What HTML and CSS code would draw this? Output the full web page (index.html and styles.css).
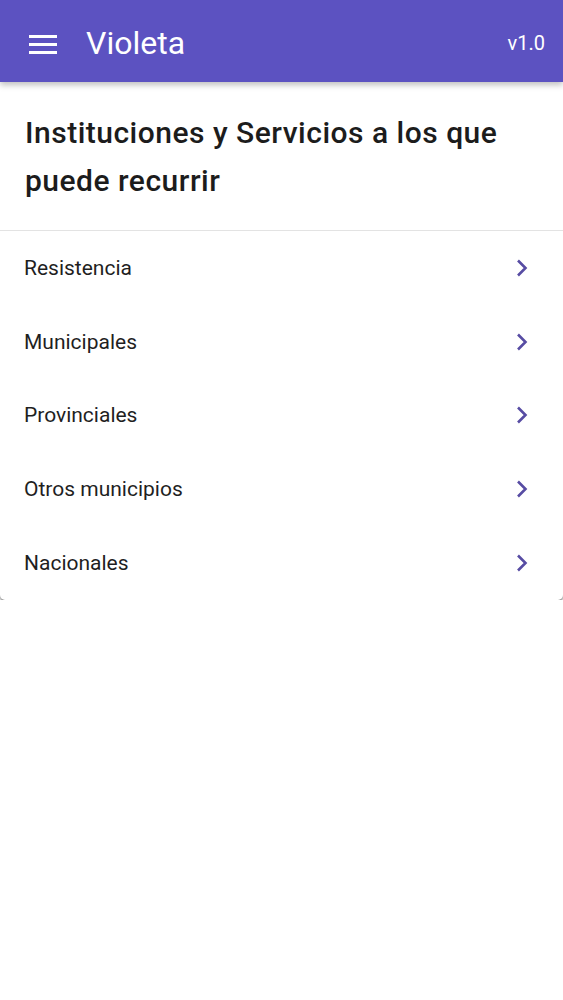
FILE: index.html
```html
<!DOCTYPE html>
<html lang="es">
<head>
<meta charset="utf-8">
<link rel="stylesheet" href="styles.css">
</head>
<body>
<header class="appbar">
  <svg class="menu" width="28" height="19" viewBox="0 0 28 19"><rect x="0" y="0" width="28" height="3" fill="#fff"/><rect x="0" y="8" width="28" height="3" fill="#fff"/><rect x="0" y="16" width="28" height="3" fill="#fff"/></svg>
  <span class="title">Violeta</span>
  <span class="version">v1.0</span>
</header>
<main class="card">
  <h1 class="heading">Instituciones y Servicios a los que puede recurrir</h1>
  <ul class="list">
    <li class="item"><span>Resistencia</span><svg class="chev" width="12" height="18" viewBox="0 0 12 18"><path d="M2 1.5 L9.5 9 L2 16.5" fill="none" stroke="#574ca3" stroke-width="2.6"/></svg></li>
    <li class="item"><span>Municipales</span><svg class="chev" width="12" height="18" viewBox="0 0 12 18"><path d="M2 1.5 L9.5 9 L2 16.5" fill="none" stroke="#574ca3" stroke-width="2.6"/></svg></li>
    <li class="item"><span>Provinciales</span><svg class="chev" width="12" height="18" viewBox="0 0 12 18"><path d="M2 1.5 L9.5 9 L2 16.5" fill="none" stroke="#574ca3" stroke-width="2.6"/></svg></li>
    <li class="item"><span>Otros municipios</span><svg class="chev" width="12" height="18" viewBox="0 0 12 18"><path d="M2 1.5 L9.5 9 L2 16.5" fill="none" stroke="#574ca3" stroke-width="2.6"/></svg></li>
    <li class="item"><span>Nacionales</span><svg class="chev" width="12" height="18" viewBox="0 0 12 18"><path d="M2 1.5 L9.5 9 L2 16.5" fill="none" stroke="#574ca3" stroke-width="2.6"/></svg></li>
  </ul>
</main>
</body>
</html>
```

FILE: styles.css
```css
* { box-sizing: border-box; }
body {
  margin: 0;
  background: #fff;
  font-family: Roboto, "Liberation Sans", sans-serif;
}
.appbar {
  height: 82px;
  background: #5c52c1;
  display: flex;
  align-items: center;
  padding: 0 18px 0 29px;
  color: #fff;
  position: relative;
  z-index: 2;
  box-shadow: 0 3px 6px rgba(0,0,0,0.25);
}
.menu { flex: none; margin-top: 7px; }
.title {
  font-size: 32px;
  margin-left: 29px;
  margin-top: 4px;
  flex: 1;
}
.version {
  font-size: 20px;
  margin-top: 4px;
}
.card {
  background: #fff;
  border-radius: 0 0 5px 5px;
  box-shadow: 0 2px 2px rgba(0,0,0,0.4), 0 1px 4px rgba(0,0,0,0.12);
}
.heading {
  margin: 0;
  padding: 27px 24px 25px 25px;
  font-size: 30px;
  font-weight: 500;
  letter-spacing: 0.5px;
  line-height: 48px;
  color: #1c1c1c;
  border-bottom: 1px solid #e3e3e3;
}
.list {
  list-style: none;
  margin: 0;
  padding: 0;
}
.item {
  height: 73.8px;
  display: flex;
  align-items: center;
  justify-content: space-between;
  padding: 0 35px 0 24px;
  font-size: 21px;
  color: #1f1f1f;
}
```
